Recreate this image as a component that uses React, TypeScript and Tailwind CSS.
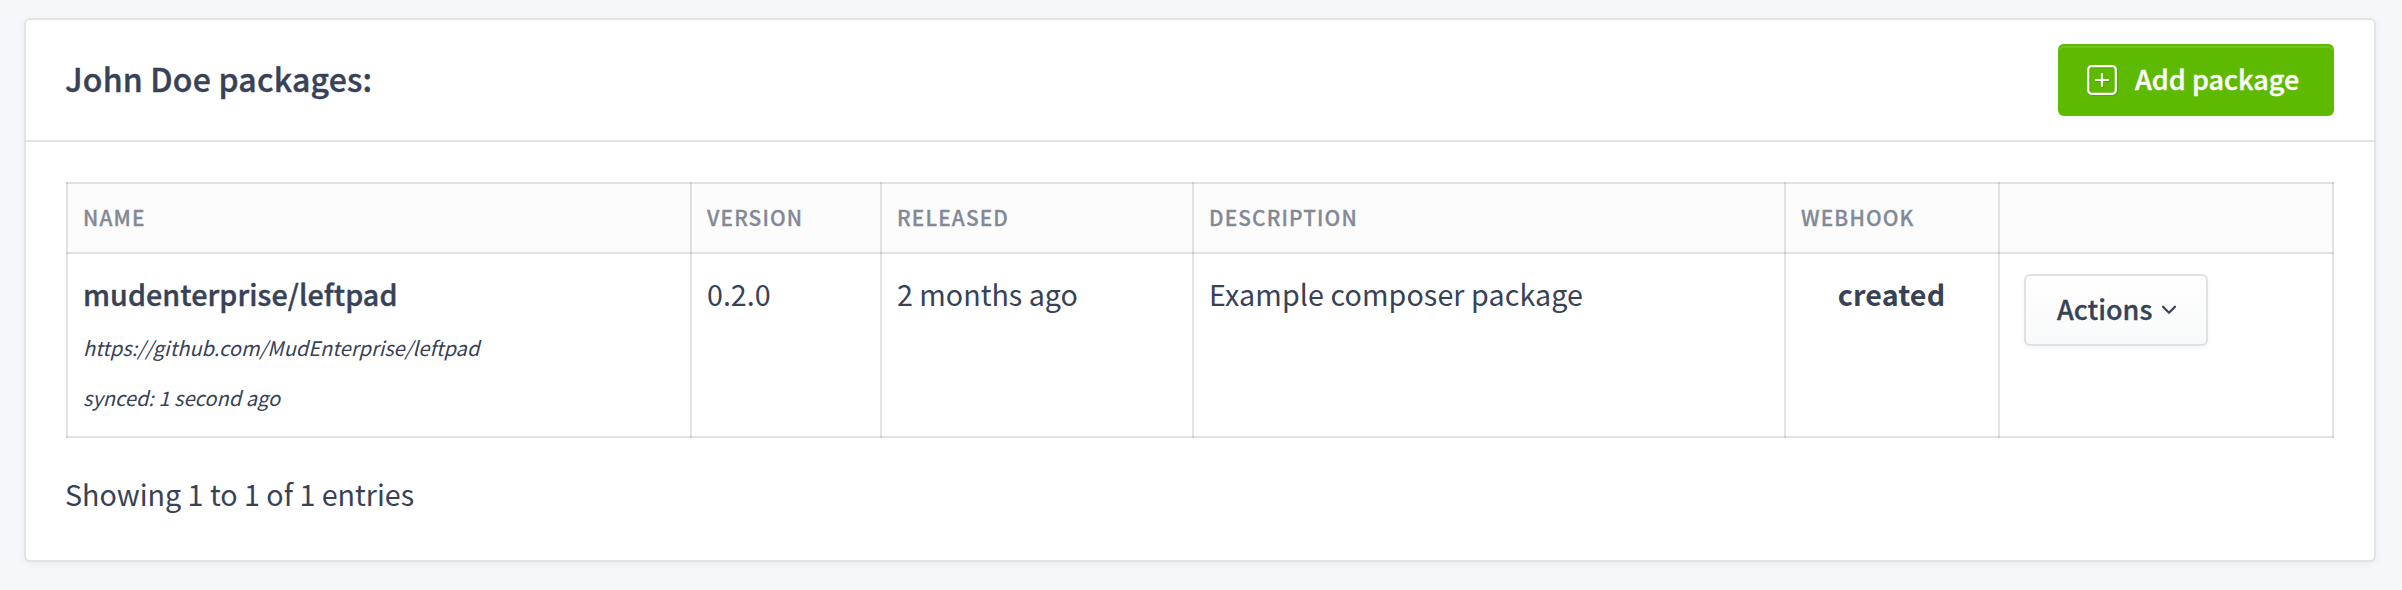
const columns = ["Name", "Version", "Released", "Description", "Webhook", ""];

const cell = "border-2 border-[#1f2937]/13 px-[15px] text-left align-top";

function PlusSquare() {
  return (
    <svg className="h-[30px] w-[30px] drop-shadow-[1px_1px_0_rgba(0,0,0,0.12)]" viewBox="0 0 30 30" fill="none" stroke="currentColor" strokeWidth="2.2">
      <rect x="1.2" y="1.1" width="27.6" height="27.7" rx="3.5" />
      <path d="M15 9v12M9 15h12" strokeLinecap="round" />
    </svg>
  );
}

function Chevron() {
  return (
    <svg className="mb-[1px] h-[10px] w-4" viewBox="0 0 16 10" fill="none" stroke="currentColor" strokeWidth="2.2">
      <path d="M2 1.7l6 6 6-6" strokeLinecap="round" strokeLinejoin="round" />
    </svg>
  );
}

export default function App() {
  return (
    <div className="h-[590px] bg-[#f5f7fb] px-6 pt-[18px] pr-[26px] font-['Noto_Sans_CJK_SC',sans-serif] text-[28.65px] text-[#374257]">
      <section className="h-[544px] rounded-[6px] border-2 border-[#e2e3e4] bg-white shadow-[0_2px_8px_rgba(0,0,0,0.05)]">
        <header className="flex h-[122px] items-center justify-between border-b-2 border-[#e2e3e4] px-10">
          <h1 className="-ml-px pb-[5px] text-[32px] leading-10 font-medium tracking-[0.2px] [-webkit-text-stroke:0.4px]">John Doe packages:</h1>
          <button className="flex h-[72px] w-[276px] items-center rounded-[6px] bg-[#5eba00] pl-[29px] text-[27px] leading-9 font-medium text-white shadow-[0_2px_4px_rgba(0,0,0,0.05),inset_0_2px_0_#5eba00,inset_0_4px_0_rgba(255,255,255,0.13)]">
            <PlusSquare />
            <span className="pb-[2px] pl-[18px] [-webkit-text-stroke:0.4px]">Add package</span>
          </button>
        </header>
        <div className="px-10 pt-10">
          <table className="w-[2268px] table-fixed border-collapse">
            <colgroup>
              <col className="w-[624px]" />
              <col className="w-[190px]" />
              <col className="w-[312px]" />
              <col className="w-[592px]" />
              <col className="w-[214px]" />
              <col className="w-[334px]" />
            </colgroup>
            <thead>
              <tr className="h-[70px] bg-[#fcfcfc]">
                {columns.map((c) => (
                  <th key={c} className={`${cell} pt-[17px] text-[20.8px] leading-8 font-medium tracking-[1.15px] text-[#828997] uppercase [-webkit-text-stroke:0.3px]`}>
                    {c}
                  </th>
                ))}
              </tr>
            </thead>
            <tbody>
              <tr className="h-[184px] leading-12">
                <td className={`${cell} pt-4`}>
                  <div className="font-medium tracking-[0.08px] [-webkit-text-stroke:0.4px]">mudenterprise/leftpad</div>
                  <div className="pt-[5px] text-[20px] leading-[50px] tracking-[0.03px] italic">
                    <div>https://github.com/MudEnterprise/leftpad</div>
                    <div>synced: 1 second ago</div>
                  </div>
                </td>
                <td className={`${cell} pt-4`}>0.2.0</td>
                <td className={`${cell} pt-4`}>2 months ago</td>
                <td className={`${cell} pt-4 tracking-[0.1px]`}>Example composer package</td>
                <td className="border-2 border-[#1f2937]/13 pt-4 pr-px text-center align-top font-bold tracking-[0.15px]">created</td>
                <td className="border-2 border-[#1f2937]/13 pt-5 pl-6 align-top">
                  <button className="flex h-[72px] w-[184px] items-center gap-[9px] rounded-[6px] border-2 border-[#dfe1e3] bg-gradient-to-b from-white to-[#f8f9fa] pl-[31px] text-[27px] leading-9 font-medium shadow-[0_2px_4px_rgba(0,0,0,0.05)]">
                    <span className="pb-[2px] [-webkit-text-stroke:0.3px]">Actions</span>
                    <Chevron />
                  </button>
                </td>
              </tr>
            </tbody>
          </table>
          <p className="-ml-px pt-[32px] leading-12">Showing 1 to 1 of 1 entries</p>
        </div>
      </section>
    </div>
  );
}
